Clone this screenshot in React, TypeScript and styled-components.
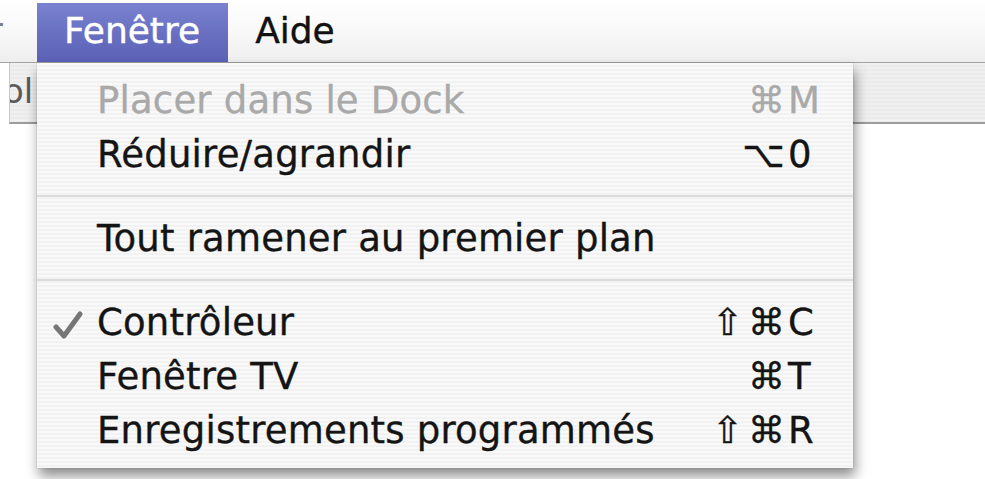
import styled, { createGlobalStyle } from 'styled-components';

const GlobalStyle = createGlobalStyle`
  html, body {
    margin: 0;
    padding: 0;
    background: #ffffff;
  }
`;

const Page = styled.div`
  position: relative;
  width: 985px;
  height: 479px;
  overflow: hidden;
  background: #ffffff;
  font-family: "DejaVu Sans", "Noto Sans", sans-serif;
`;

const MenuBar = styled.div`
  display: flex;
  align-items: flex-end;
  height: 62px;
  border-bottom: 1px solid #a4a4a4;
  background: linear-gradient(#ffffff, #f7f7f7 60%, #eeeeee);
`;

// tail of the previous menu title, cut off at the left edge
const Fragment = styled.div`
  width: 37px;
  height: 59px;
  overflow: hidden;
  font-size: 36px;
  line-height: 55px;
  color: #777;
  text-indent: -12px;
`;

const MenuTitle = styled.div<{ $active?: boolean }>`
  height: 59px;
  padding: 0 28px 0 27px;
  font-size: 36px;
  line-height: 55px;
  color: ${(p) => (p.$active ? '#ffffff' : '#111111')};
  -webkit-text-stroke: 0.4px currentColor;
  background: ${(p) => (p.$active ? 'linear-gradient(#7a82d0, #6970c2 50%, #5b61b5)' : 'transparent')};
  box-sizing: border-box;
`;

const Window = styled.div`
  margin-left: 9px;
  display: flex;
  flex-direction: column;
`;

const Toolbar = styled.div`
  height: 59px;
  border-bottom: 2px solid #9c9c9c;
  border-left: 1px solid #c8c8c8;
  background: repeating-linear-gradient(#f0f0f0 0 2px, #ebebeb 2px 4px);
  overflow: hidden;
`;

const ToolbarLabel = styled.div`
  font-size: 34px;
  line-height: 56px;
  color: #5a5a5a;
  text-indent: -7px;
`;

const Content = styled.div`
  height: 360px;
  background: #ffffff;
`;

const Dropdown = styled.div`
  position: absolute;
  left: 37px;
  top: 63px;
  width: 816px;
  padding: 11px 0 10px;
  box-sizing: border-box;
  background: repeating-linear-gradient(#f9f9f9 0 2px, #f2f2f2 2px 4px);
  box-shadow: 2px 8px 12px rgba(0, 0, 0, 0.45), 0 0 1px rgba(0, 0, 0, 0.3);
`;

const Item = styled.div<{ $disabled?: boolean }>`
  position: relative;
  display: flex;
  height: 54px;
  padding: 0 31px 0 60px;
  font-size: 37px;
  line-height: 54px;
  letter-spacing: 0.2px;
  color: ${(p) => (p.$disabled ? '#a9a9a9' : '#141414')};
  -webkit-text-stroke: 0.35px currentColor;
  white-space: nowrap;
`;

const Check = styled.svg`
  position: absolute;
  left: 16px;
  top: 15px;
`;

const Label = styled.span`
  flex: 1;
`;

const Mods = styled.span`
  display: inline-block;
  text-align: right;
  letter-spacing: 5px;
`;

const Key = styled.span`
  display: inline-block;
  width: 34px;
  margin-left: -2px;
`;

const Separator = styled.div`
  height: 30px;
  display: flex;
  align-items: center;

  &::after {
    content: '';
    flex: 1;
    height: 2px;
    margin-top: -3px;
    background: #dcdcdc;
  }
`;

type Entry =
  | { kind: 'item'; label: string; mods: string; key: string; disabled?: boolean; checked?: boolean }
  | { kind: 'sep' };

const entries: Entry[] = [
  { kind: 'item', label: 'Placer dans le Dock', mods: '\u2318', key: 'M', disabled: true },
  { kind: 'item', label: 'Réduire/agrandir', mods: '\u2325', key: '0' },
  { kind: 'sep' },
  { kind: 'item', label: 'Tout ramener au premier plan', mods: '', key: '' },
  { kind: 'sep' },
  { kind: 'item', label: 'Contrôleur', mods: '\u21E7\u2318', key: 'C', checked: true },
  { kind: 'item', label: 'Fenêtre TV', mods: '\u2318', key: 'T' },
  { kind: 'item', label: 'Enregistrements programmés', mods: '\u21E7\u2318', key: 'R' },
];

const CheckMark = () => (
  <Check width="30" height="28" viewBox="0 0 30 28">
    <path d="M3 16 L11 25 L27 3" fill="none" stroke="#767676" strokeWidth="5" strokeLinecap="round" strokeLinejoin="round" />
  </Check>
);

export default function App() {
  return (
    <Page>
      <GlobalStyle />
      <MenuBar>
        <Fragment>r</Fragment>
        <MenuTitle $active>Fenêtre</MenuTitle>
        <MenuTitle>Aide</MenuTitle>
      </MenuBar>
      <Window>
        <Toolbar>
          <ToolbarLabel>ol</ToolbarLabel>
        </Toolbar>
        <Content />
      </Window>
      <Dropdown>
        {entries.map((e, i) =>
          e.kind === 'sep' ? (
            <Separator key={i} />
          ) : (
            <Item key={i} $disabled={e.disabled}>
              {e.checked && <CheckMark />}
              <Label>{e.label}</Label>
              {e.key && (
                <span>
                  <Mods>{e.mods}</Mods>
                  <Key>{e.key}</Key>
                </span>
              )}
            </Item>
          )
        )}
      </Dropdown>
    </Page>
  );
}
